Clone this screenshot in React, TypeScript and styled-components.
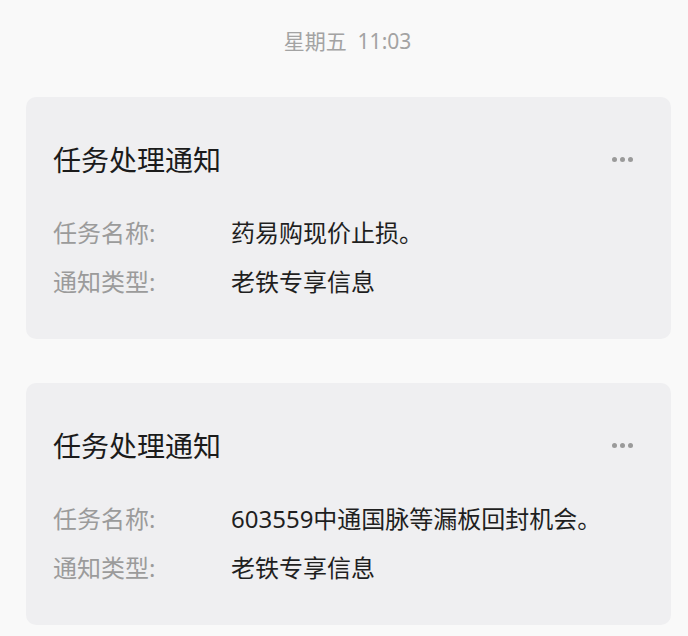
import styled, { createGlobalStyle } from 'styled-components'

const GlobalStyle = createGlobalStyle`
    html, body {
        margin: 0;
        padding: 0;
        background: #f9f9f9;
    }
    body {
        font-family: 'Noto Sans', 'Noto Sans CJK SC', sans-serif;
    }
`

const Page = styled.div`
    display: flex;
    flex-direction: column;
    padding: 27px 17px 0 26px;
    gap: 44px;
`

const TimeStamp = styled.div`
    text-align: center;
    font-size: 21px;
    line-height: 28px;
    color: #a3a3a3;
    margin-right: 2px;
    margin-bottom: -2px;
`

const Card = styled.div`
    background: #efeff1;
    border-radius: 10px;
    padding: 45px 38px 33px 27px;
    display: flex;
    flex-direction: column;
`

const CardHeader = styled.div`
    display: flex;
    align-items: center;
    justify-content: space-between;
    margin-bottom: 30px;
`

const Title = styled.div`
    font-size: 28px;
    line-height: 36px;
    color: #1b1b1b;
`

const MoreButton = styled.div`
    display: flex;
    gap: 3px;
    padding: 4px 0;
    margin-top: -2px;
    span {
        width: 5px;
        height: 5px;
        border-radius: 50%;
        background: #9a9a9a;
    }
`

const Row = styled.div`
    display: flex;
    font-size: 24px;
    line-height: 49px;
`

const Label = styled.div`
    width: 178px;
    flex-shrink: 0;
    color: #9b9b9b;
`

const Value = styled.div`
    color: #1f1f1f;
`

type Notice = {
    name: string
    kind: string
}

const notices: Notice[] = [
    { name: '药易购现价止损。', kind: '老铁专享信息' },
    { name: '603559中通国脉等漏板回封机会。', kind: '老铁专享信息' },
]

function App() {
    return (
        <>
            <GlobalStyle />
            <Page>
                <TimeStamp>星期五&nbsp; 11:03</TimeStamp>
                {notices.map((n, i) => (
                    <Card key={i}>
                        <CardHeader>
                            <Title>任务处理通知</Title>
                            <MoreButton>
                                <span />
                                <span />
                                <span />
                            </MoreButton>
                        </CardHeader>
                        <Row>
                            <Label>任务名称:</Label>
                            <Value>{n.name}</Value>
                        </Row>
                        <Row>
                            <Label>通知类型:</Label>
                            <Value>{n.kind}</Value>
                        </Row>
                    </Card>
                ))}
            </Page>
        </>
    )
}

export default App
